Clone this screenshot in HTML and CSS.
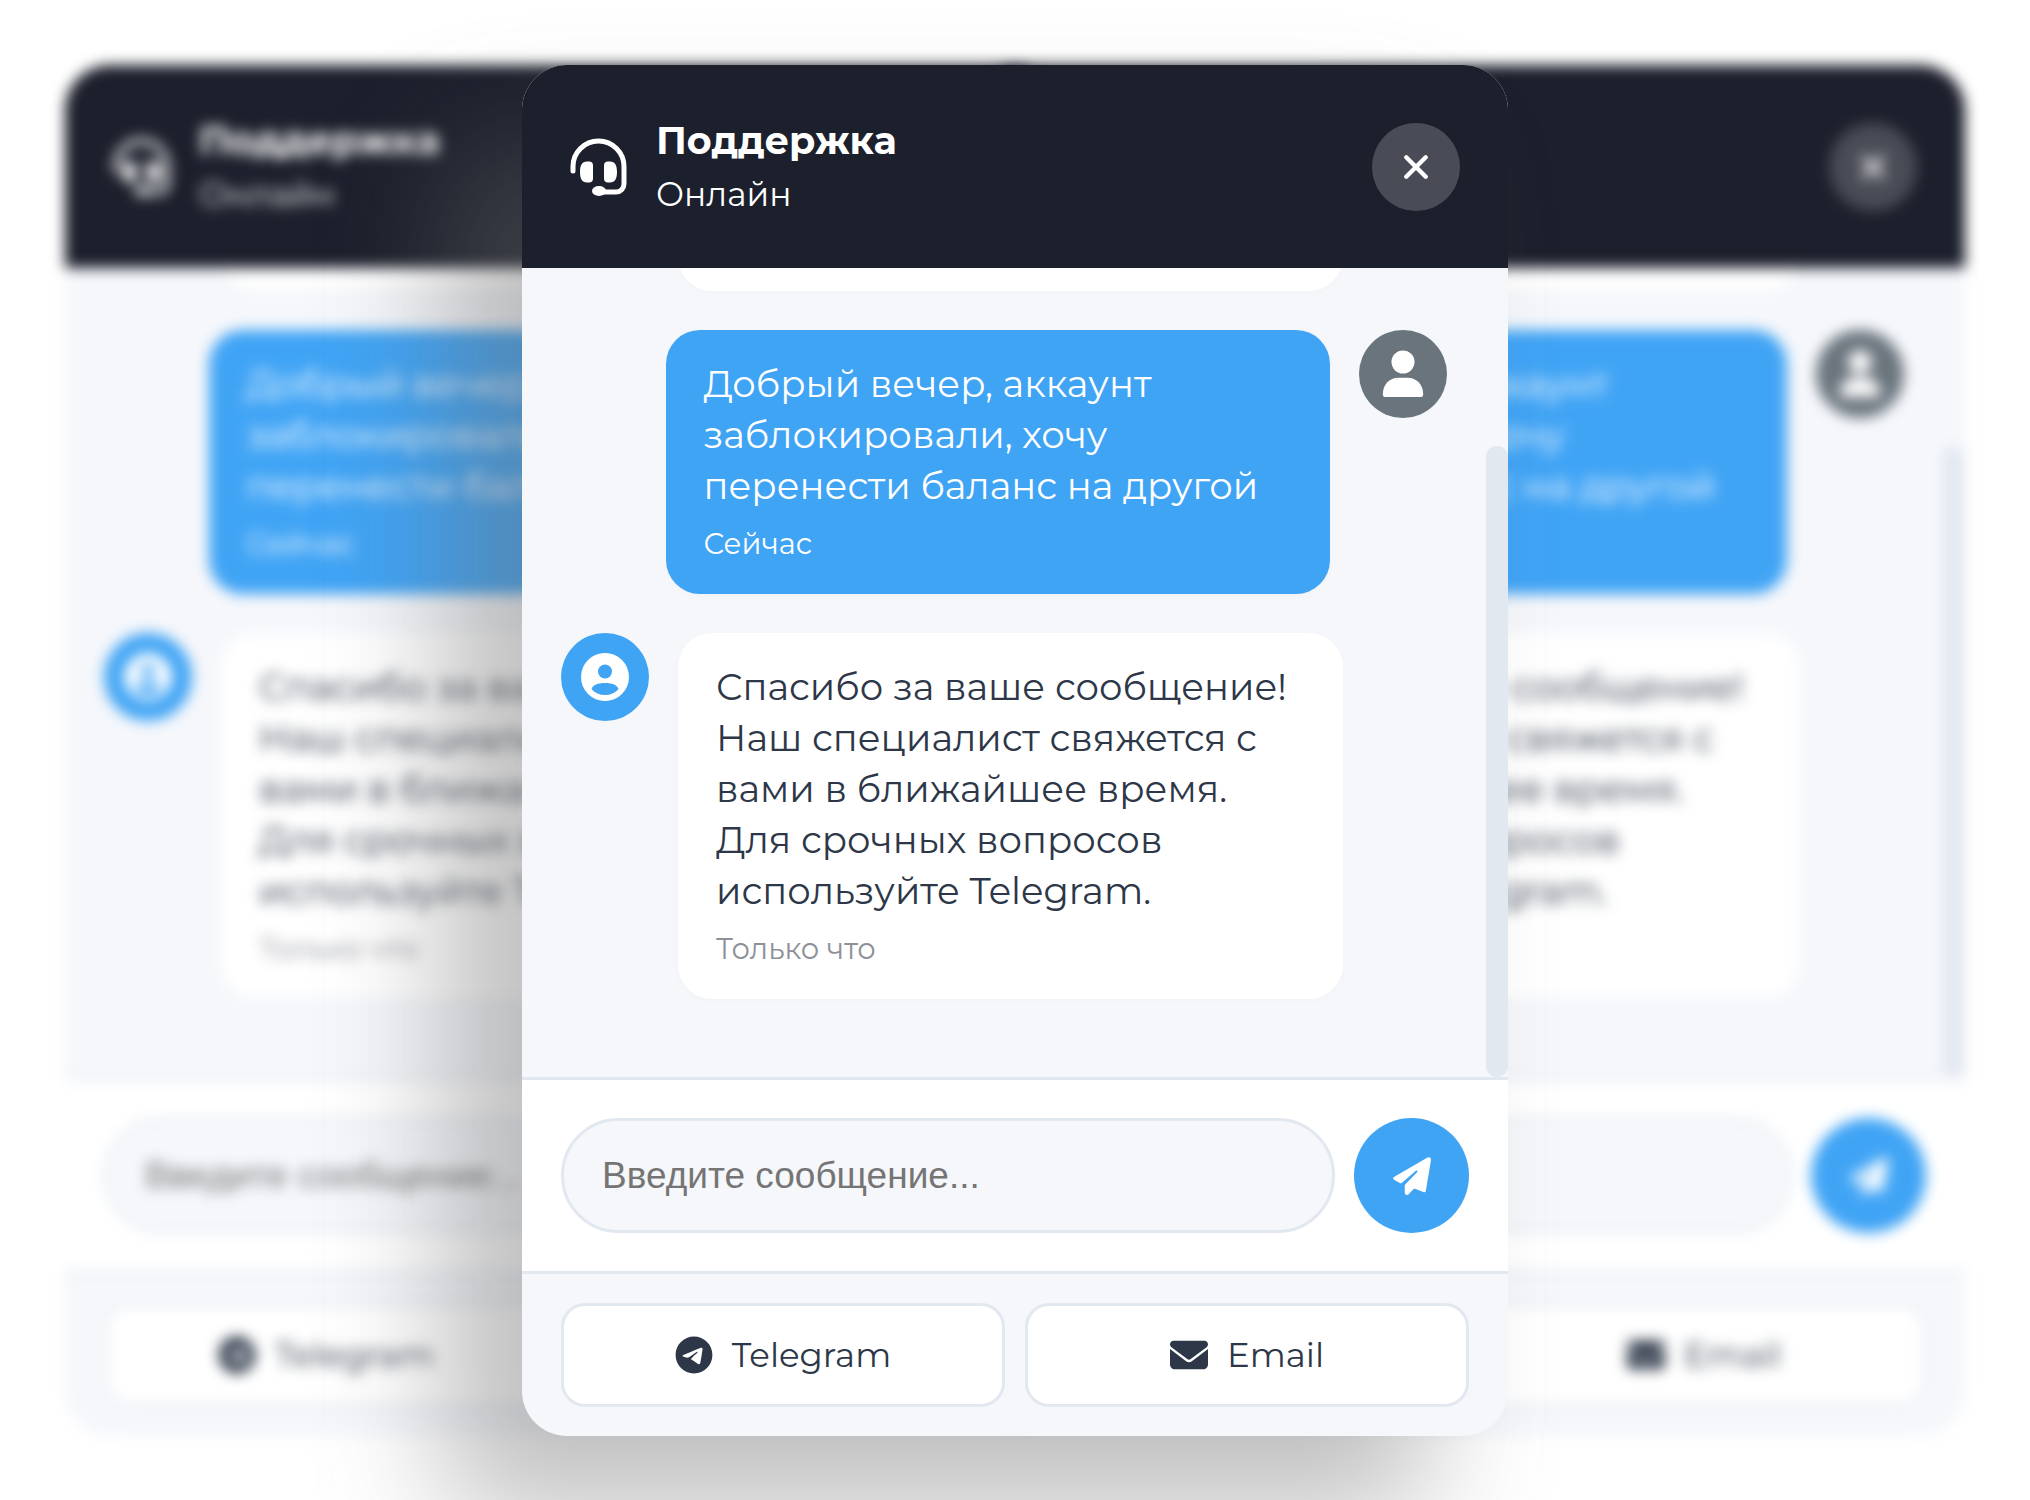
FILE: index.html
```html
<!DOCTYPE html>
<html lang="ru">
<head>
  <meta charset="UTF-8">
  <title>Поддержка</title>
  <meta name="viewport" content="width=device-width, initial-scale=1.0">
  <link rel="stylesheet" href="styles.css">
</head>
<body>

<main class="stage" id="stage">
  <section class="chat" id="chat">
    <header class="chat-header">
      <svg class="headset" viewBox="0 0 58 58" fill="none">
        <path d="M3 33V28.500a25.500 25.500 0 0 1 51 0V46a8 8 0 0 1-8 8H30" stroke="#fff" stroke-width="5" stroke-linecap="round" stroke-linejoin="round"/>
        <path d="M17 23.500h2q4 0 4 4v13q0 4-4 4h-2c-5 0-7-4-7-10.500s2-10.500 7-10.500zM40 23.500h-2q-4 0-4 4v13q0 4 4 4h2c5 0 7-4 7-10.500s-2-10.500-7-10.500z" fill="#fff"/>
        <ellipse cx="29" cy="53" rx="7" ry="5" fill="#fff"/>
      </svg>
      <div class="chat-title">
        <h1>Поддержка</h1>
        <p>Онлайн</p>
      </div>
      <button class="close" type="button" aria-label="Закрыть">
        <svg viewBox="0 0 24 24"><path d="M3 3l18 18M21 3L3 21" stroke="#fff" stroke-width="4" stroke-linecap="round"/></svg>
      </button>
    </header>

    <div class="chat-body">
      <div class="messages">
        <div class="message bot">
          <div class="bubble bubble-prev"></div>
        </div>
        <div class="message user">
          <div class="avatar">
            <svg viewBox="0 0 44 50" fill="#fff"><circle cx="22" cy="12.500" r="12"/><path d="M1 46C1 36 8 29 17 29h10c9 0 16 7 16 17q0 3-3 3H4q-3 0-3-3z"/></svg>
          </div>
          <div class="bubble">
            <p>Добрый вечер, аккаунт заблокировали, хочу перенести баланс на другой</p>
            <time>Сейчас</time>
          </div>
        </div>
        <div class="message bot">
          <div class="avatar">
            <svg viewBox="0 0 48 48"><circle cx="24" cy="24" r="24" fill="#fff"/><g fill="#40a4f5"><circle cx="24" cy="18.500" r="7"/><path d="M10.500 36c1.500-4 6-6 13.500-6s12 2 13.500 6C34 40 29.500 42 24 42s-10-2-13.500-6z"/></g></svg>
          </div>
          <div class="bubble">
            <p>Спасибо за ваше сообщение! Наш специалист свяжется с вами в ближайшее время. Для срочных вопросов используйте Telegram.</p>
            <time>Только что</time>
          </div>
        </div>
      </div>
      <div class="scrollbar"><div class="thumb"></div></div>
    </div>

    <form class="chat-form">
      <input type="text" aria-label="Сообщение" placeholder="Введите сообщение...">
      <button class="send" type="button" aria-label="Отправить">
        <svg viewBox="0 0 110 110" fill="#fff"><path d="M100 1.500L4 57q-7 4.500-1 9l17 9q4 2 7-1L66 40q4-2 5 1 0 2-2 4L36 79q-2 2-2 5v18q0 8 7 8 3 0 5-3l13-14q2-2 5-1l25 10q5 1.500 6-3.500L110 9q0-11-10-7.500z"/></svg>
      </button>
    </form>

    <footer class="chat-links">
      <a class="link-telegram" href="#telegram">
        <svg viewBox="0 0 496 512"><path fill="currentColor" d="M248 8C111.033 8 0 119.033 0 256S111.033 504 248 504 496 392.967 496 256 384.967 8 248 8ZM362.952 176.660c-3.732 39.215-19.881 134.378-28.100 178.300-3.476 18.584-10.322 24.816-16.948 25.425-14.400 1.326-25.338-9.517-39.287-18.661-21.827-14.308-34.158-23.215-55.346-37.177-24.485-16.135-8.612-25 5.342-39.500 3.652-3.793 67.107-61.510 68.335-66.746.153-.655.300-3.100-1.154-4.384s-3.590-.849-5.135-.500q-3.283.746-104.608 69.142-14.845 10.194-26.894 9.934c-8.855-.191-25.888-5.006-38.551-9.123-15.531-5.048-27.875-7.717-26.800-16.291q.840-6.700 18.450-13.700 108.446-47.248 144.628-62.300c68.872-28.647 83.183-33.623 92.511-33.789 2.052-.034 6.639.474 9.610 2.885a10.452 10.452 0 0 1 3.530 6.716A43.765 43.765 0 0 1 362.952 176.660Z"/></svg>
        Telegram
      </a>
      <a class="link-email" href="#email">
        <svg viewBox="0 0 512 512"><path fill="currentColor" d="M48 64C21.500 64 0 85.500 0 112c0 15.100 7.100 29.300 19.200 38.400L236.800 313.600c11.400 8.500 27 8.500 38.400 0L492.800 150.400c12.100-9.100 19.200-23.300 19.200-38.400c0-26.500-21.500-48-48-48L48 64zM0 176L0 384c0 35.300 28.700 64 64 64l384 0c35.300 0 64-28.700 64-64l0-208L294.400 339.200c-22.800 17.100-54 17.100-76.800 0L0 176z"/></svg>
        Email
      </a>
    </footer>
  </section>
</main>

<script src="script.js"></script>
</body>
</html>
```
FILE: styles.css
```css
* {
  box-sizing: border-box;
}
body {
  margin: 0;
  background: #fff;
  font-family: 'Montserrat', 'Inter', sans-serif;
  color: #2d3748;
}
h1, p {
  margin: 0;
}
.stage {
  display: grid;
  height: 100vh;
  padding: 65px 65px 64px;
  overflow: hidden;
}

/* all cards share one grid cell, the blurred ones sit behind */
.chat {
  grid-area: 1 / 1;
  justify-self: center;
  z-index: 1;
  display: flex;
  flex-direction: column;
  width: 986px;
  max-width: 100%;
  min-height: 0;
  border-radius: 45px;
  overflow: hidden;
  background: #f5f7fb;
  box-shadow: -80px 80px 120px rgba(105, 105, 105, 0.42);
}
.chat.back {
  z-index: 0;
  filter: blur(7px);
  box-shadow: none;
}
.chat.left {
  justify-self: start;
}
.chat.right {
  justify-self: end;
}
.left .link-email,
.right .link-telegram,
.right .chat-title,
.right input::placeholder {
  visibility: hidden;
}

.chat-header {
  display: flex;
  align-items: center;
  gap: 28px;
  padding: 47px 48px;
  background: #1c202c;
  color: #fff;
}
.headset {
  width: 58px;
  height: 58px;
}
.chat-title {
  flex: 1;
  padding-top: 2px;
}
.chat-title h1 {
  font-size: 38px;
  line-height: 54px;
  font-weight: 700;
}
.chat-title p {
  font-size: 33px;
  line-height: 53px;
}
.close {
  display: flex;
  align-items: center;
  justify-content: center;
  width: 88px;
  height: 88px;
  padding: 0;
  border: none;
  border-radius: 50%;
  background: #494c56;
}
.close svg {
  width: 26px;
  height: 26px;
}

.chat-body {
  flex: 1;
  display: flex;
  min-height: 0;
}
.messages {
  flex: 1;
  display: flex;
  flex-direction: column;
  justify-content: flex-end;
  gap: 39px;
  padding: 0 39px 78px;
  overflow: hidden;
}
.message {
  display: flex;
  align-items: flex-start;
  flex-shrink: 0;
  gap: 29px;
}
.message.user {
  flex-direction: row-reverse;
}
.avatar {
  display: flex;
  align-items: center;
  justify-content: center;
  flex-shrink: 0;
  width: 88px;
  height: 88px;
  border-radius: 50%;
  background: #40a4f5;
}
.avatar svg {
  width: 48px;
  height: 48px;
}
.user .avatar {
  background: #6a747d;
}
.bubble {
  width: 75%;
  padding: 28px 38px;
  border-radius: 34px;
  background: #fff;
  box-shadow: 0 2px 8px rgba(0, 0, 0, 0.02);
}
.user .bubble {
  background: #40a4f5;
  color: #fff;
}
.bubble-prev {
  min-height: 100px;
  margin-left: 117px;
}
.bubble p {
  font-size: 37px;
  line-height: 51px;
}
.bubble time {
  display: block;
  margin-top: 11px;
  font-size: 29px;
  line-height: 44px;
}
.bot time {
  color: #8e9199;
}
.scrollbar {
  display: flex;
  align-items: flex-end;
  width: 22px;
}
.thumb {
  width: 100%;
  height: 78%;
  border-radius: 11px;
  background: #e2e8f0;
}

.chat-form {
  display: flex;
  gap: 19px;
  padding: 38px 39px;
  border-top: 3px solid #e2e8f0;
  background: #fff;
}
.chat-form input {
  flex: 1;
  min-width: 0;
  height: 115px;
  padding: 0 38px;
  border: 3px solid #e2e8f0;
  border-radius: 58px;
  background: #f5f7fb;
  font-family: 'Liberation Sans', Arial, sans-serif;
  font-size: 37px;
}
.chat-form input::placeholder {
  color: #757575;
}
.send {
  display: flex;
  align-items: center;
  justify-content: center;
  width: 115px;
  height: 115px;
  padding: 0;
  border: none;
  border-radius: 50%;
  background: #40a4f5;
}
.send svg {
  width: 38px;
  height: 38px;
}

.chat-links {
  display: grid;
  grid-template-columns: 1fr 1fr;
  gap: 20px;
  padding: 29px 39px;
  border-top: 3px solid #e2e8f0;
}
.chat-links a {
  display: flex;
  align-items: center;
  justify-content: center;
  gap: 19px;
  height: 104px;
  border: 3px solid #e2e8f0;
  border-radius: 24px;
  background: #fff;
  color: #2d3748;
  font-size: 34px;
  text-decoration: none;
}
.chat-links svg {
  width: 38px;
  height: 38px;
}
```
FILE: script.js
```js
// blurred copies of the widget on both sides
const stage = document.getElementById("stage");
const chat = document.getElementById("chat");

["right", "left"].forEach(side => {
  const copy = chat.cloneNode(true);
  copy.removeAttribute("id");
  copy.classList.add("back", side);
  copy.inert = true;
  stage.insertBefore(copy, chat);
});
```
